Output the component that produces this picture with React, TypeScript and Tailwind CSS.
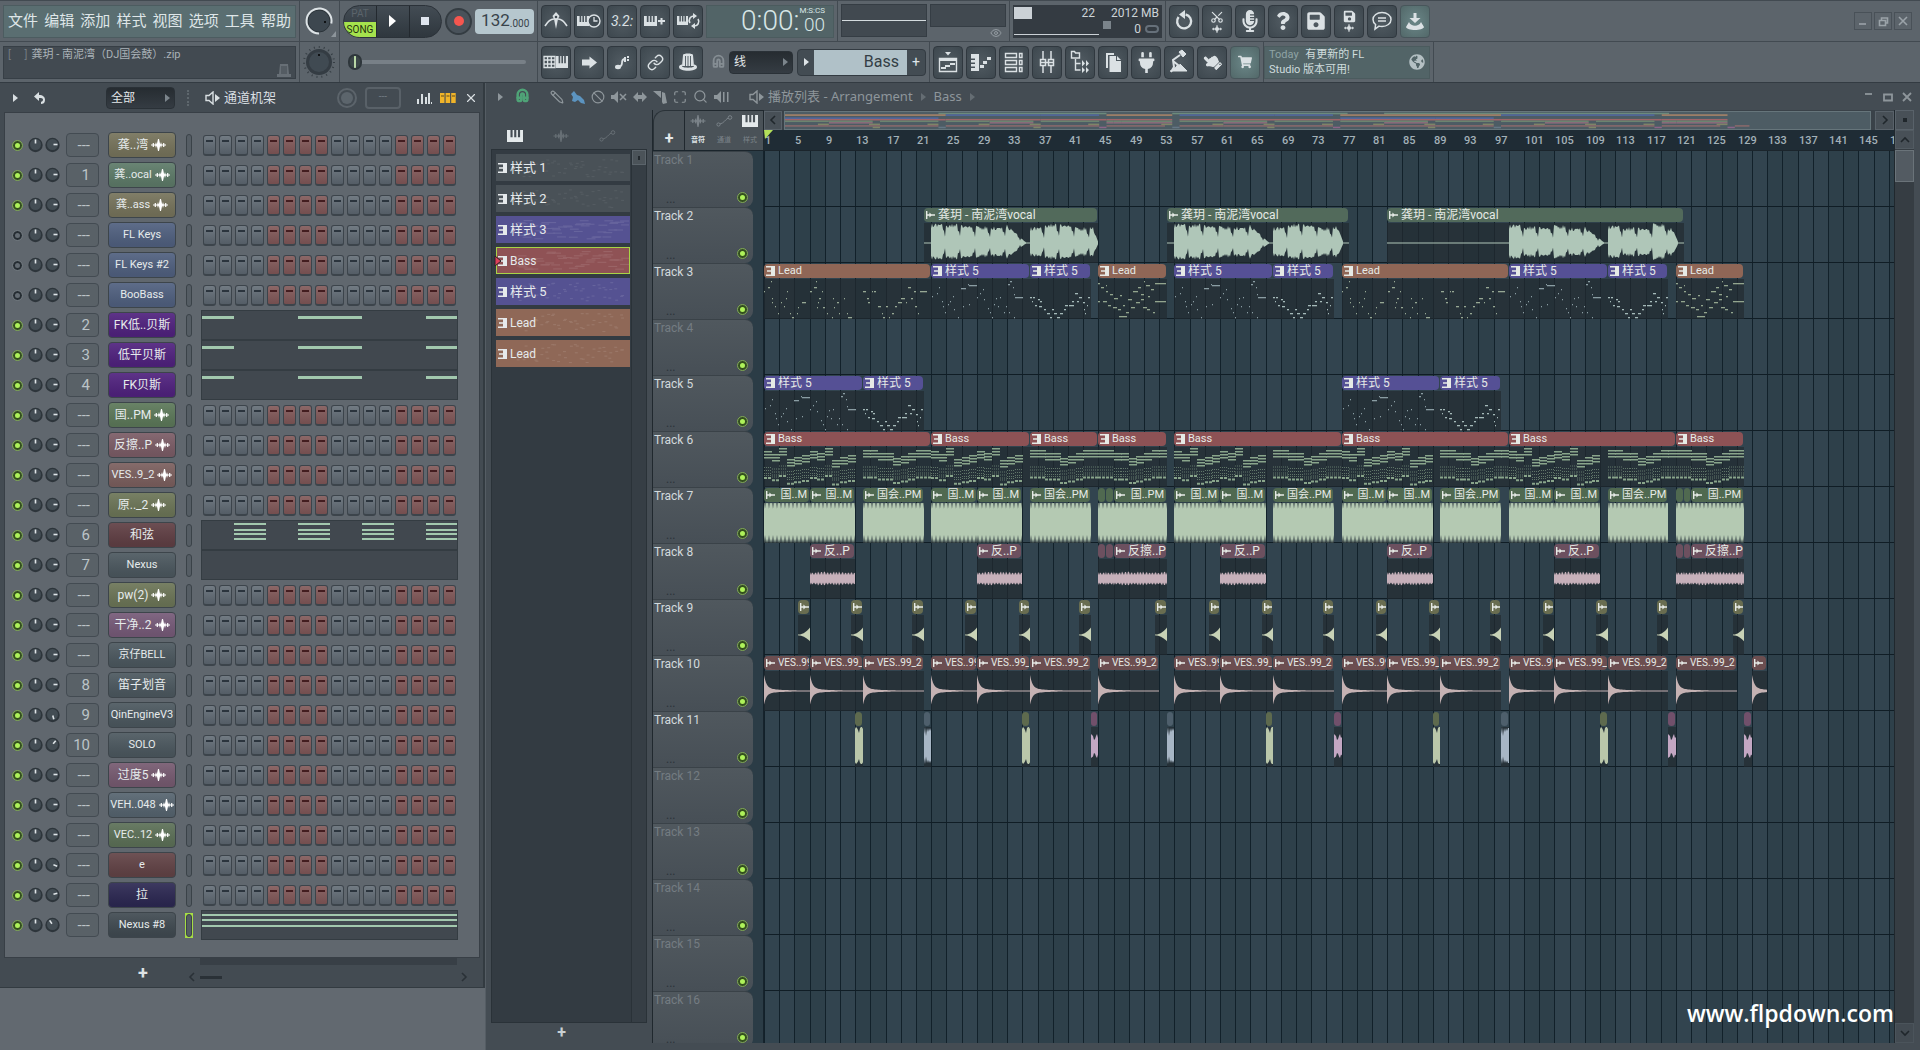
import { ReactNode } from 'react';
import clsx from 'clsx';
import { Link, Scissors, Eye, Magnet, X, Search, Ban, Maximize, Pencil } from 'lucide-react';
import { FaQuestion, FaMicrophoneAlt, FaSave, FaPlug, FaHandPointUp, FaShoppingCart, FaGlobeAmericas } from 'react-icons/fa';

const BAR = 7.6;
const TOTAL_BARS = 148.5;

const px = (bars: number) => Math.round(bars * BAR);

function noise(n: number) {
  const s = Math.sin(n * 127.1 + 11.7) * 43758.5453;
  return s - Math.floor(s);
}

/* ---------- drawings ---------- */

function Svg({ w = 24, h = 24, className, children }: { w?: number; h?: number; className?: string; children: ReactNode }) {
  return (
    <svg width={w} height={h} viewBox={`0 0 ${w} ${h}`} className={clsx('shrink-0', className)} fill="currentColor" aria-hidden="true">
      {children}
    </svg>
  );
}

function Keys({ x = 0, y = 0, w = 12, h = 10 }: { x?: number; y?: number; w?: number; h?: number }) {
  const u = w / 12;
  return (
    <path
      d={`M${x} ${y}h${2.6 * u}v${h * 0.6}h${1.6 * u}v${-h * 0.6}h${1.2 * u}v${h * 0.6}h${1.6 * u}v${-h * 0.6}h${1.2 * u}v${h * 0.6}h${1.6 * u}v${-h * 0.6}h${2.2 * u}v${h}h${-w}z`}
    />
  );
}

function KeysIcon({ w = 16, h = 12, className }: { w?: number; h?: number; className?: string }) {
  return (
    <Svg w={w} h={h} className={className}>
      <Keys w={w} h={h} />
    </Svg>
  );
}

function WaveIcon({ className, w = 15, h = 12 }: { className?: string; w?: number; h?: number }) {
  return (
    <svg width={w} height={h} viewBox="0 0 15 12" fill="currentColor" className={clsx('shrink-0', className)} aria-hidden="true">
      <path d="M0 5.400h1.700V4h1.200v1.400h1.300l.8-2.400.8 2.400L7 0h1l1.200 5.400.8-2.400.8 2.400h1.300V4h1.200v1.400H15v1.200h-1.700V8h-1.200V6.600h-1.300L10 9l-.8-2.400L8 12H7L5.800 6.600 5 9l-.8-2.400H2.900V8H1.700V6.600H0z" />
    </svg>
  );
}

function AutomationIcon({ className }: { className?: string }) {
  return (
    <Svg w={17} h={12} className={className}>
      <g fill="none" stroke="currentColor">
        <circle cx="2.5" cy="9.5" r="1.6" />
        <circle cx="14" cy="2.5" r="1.8" />
        <path d="M4 9c4-1 5-4 8-6" />
      </g>
    </Svg>
  );
}

function SpeakerArrow({ className }: { className?: string }) {
  return (
    <Svg w={15} h={14} className={className}>
      <path d="M8 1v12L4 9.5H1v-5h3z" fill="none" stroke="currentColor" strokeWidth="1.4" />
      <path d="M10 3l5 4-5 4z" />
    </Svg>
  );
}

function PatternGlyph() {
  return (
    <Svg w={9} h={10}>
      <path d="M0 0h9v10H0V8.400h5V5.800H1V4.200h4V1.600H0z" />
    </Svg>
  );
}

function SampleGlyph() {
  return (
    <Svg w={9} h={8}>
      <path d="M0 0h1.400v3.300h2V1.500L5.400 3.300H9v1.400H5.400L3.400 6.500V4.700h-2V8H0z" />
    </Svg>
  );
}

function Chevron({ className }: { className?: string }) {
  return (
    <Svg w={5} h={8} className={className}>
      <path d="M0 0l5 4-5 4z" />
    </Svg>
  );
}

function Angle({ className, d }: { className?: string; d: string }) {
  return (
    <Svg w={10} h={10} className={className}>
      <path d={d} fill="none" stroke="currentColor" strokeWidth="1.6" />
    </Svg>
  );
}

const toolIcons: Record<string, ReactNode> = {
  metronome: (
    <Svg w={28} h={30}>
      <path d="M3 20c3-5 6-7 9-7M25 20c-3-5-6-7-9-7" fill="none" stroke="currentColor" strokeWidth="1.6" />
      <path d="M14 6l3.500 4-1.500 3-2 10-2-10-1.500-3z" />
      <circle cx="14" cy="11" r="1.300" fill="#414b52" />
    </Svg>
  ),
  countdown: (
    <Svg w={28} h={30}>
      <Keys x={2} y={10} w={12} h={10} />
      <circle cx="19" cy="15" r="6" fill="#414b52" stroke="currentColor" strokeWidth="1.400" />
      <path d="M19 11v4h3.500" fill="none" stroke="currentColor" strokeWidth="1.300" />
    </Svg>
  ),
  blend: (
    <Svg w={28} h={30}>
      <Keys x={3} y={10} w={13} h={10} />
      <path d="M19.500 12h2v2h2.500v2h-2.500v2.500h-2V16H17v-2h2.500z" />
    </Svg>
  ),
  loop: (
    <Svg w={28} h={30}>
      <Keys x={3} y={10} w={11} h={9} />
      <path d="M16 17a4.500 4.500 0 0 1 4-7M24 13a4.500 4.500 0 0 1-4 7" fill="none" stroke="currentColor" strokeWidth="1.600" />
      <path d="M19 7l4 3-4 3zM21 17l-4 3 4 3z" />
    </Svg>
  ),
  typing: (
    <Svg w={28} h={30}>
      <path d="M2 9.500h11v11H2zM2 13h11M2 17h11M5.600 9.500v11M9.300 9.500v11" fill="none" stroke="currentColor" strokeWidth="1.300" />
      <Keys x={14} y={9} w={12} h={12} />
    </Svg>
  ),
  arrow: (
    <Svg w={28} h={30}>
      <path d="M7 12.500h7.500V9.500l7.500 6-7.500 6v-3H7z" />
    </Svg>
  ),
  slide: (
    <Svg w={28} h={30}>
      <path d="M9 20c3 0 5-1 5-4s1-4 3-4" fill="none" stroke="currentColor" strokeWidth="1.800" />
      <ellipse cx="10" cy="20" rx="3" ry="2.200" />
      <path d="M16 10h2v5h-2zM19 9h2v2h-2zM19 12h2v2h-2z" />
    </Svg>
  ),
  knob: (
    <Svg w={28} h={30}>
      <path d="M9 8c0-2 10-2 10 0l1 11H8z" />
      <path d="M11.500 9v10M14 9v10M16.500 9v10" stroke="#5a646b" />
      <path d="M5 20c0-2 3-2.500 3-2.500v2c2 1.600 10 1.600 12 0v-2s3 .500 3 2.500c0 5-18 5-18 0z" />
    </Svg>
  ),
  playlist: (
    <Svg w={28} h={30}>
      <path d="M11 5h6l-3 3.500z" />
      <path d="M5.500 11.500h17v13h-17z" fill="none" stroke="currentColor" strokeWidth="1.400" />
      <path d="M5 11h18v3H5zM7 20h5v2H7zM11 18h5v2h-5zM16 16h5v2h-5z" />
    </Svg>
  ),
  piano: (
    <Svg w={28} h={30}>
      <path d="M4 7h8v17H4v-3h4v-1.500H4V17h4v-1.500H4V13h4v-1.500H4z" />
      <path d="M13 18h4v3h-4zM16 14h4v3h-4zM20 10h4v3h-4z" />
    </Svg>
  ),
  rack: (
    <Svg w={28} h={30}>
      <path d="M5.500 6.500h11v4h-11zM5.500 13.500h11v4h-11zM5.500 20.500h11v4h-11zM19.500 6.500h2.500v4h-2.500zM19.500 13.500h2.500v4h-2.500zM19.500 20.500h2.500v4h-2.500z" fill="none" stroke="currentColor" strokeWidth="1.400" />
    </Svg>
  ),
  mixer: (
    <Svg w={28} h={30}>
      <path d="M10 4v8M10 19v7M18 4v8M18 19v7M7.500 12.500h5v6h-5zM15.500 12.500h5v6h-5zM8 15.500h12" fill="none" stroke="currentColor" strokeWidth="1.500" />
    </Svg>
  ),
  browser: (
    <Svg w={28} h={30}>
      <path d="M5.500 4.500h3l1 1.500h4v5h-8zM9.500 12v11h5M9.500 16.500h5" fill="none" stroke="currentColor" strokeWidth="1.400" />
      <path d="M16 13l3 3.500-3 3zM20 13l3 3.500-3 3zM16 20l3 3-3 3zM20 20l3 3-3 3z" />
    </Svg>
  ),
  copy: (
    <Svg w={28} h={30}>
      <path d="M7 6h8v2H9v13H7z" />
      <path d="M10.500 9H17v5h5v11H10.500zM18 9l4 4h-4z" />
    </Svg>
  ),
  crane: (
    <Svg w={28} h={30}>
      <path d="M14 5l3-2 4 4-3 3zM5 24h17l-7-7" stroke="currentColor" strokeWidth="1" />
      <path d="M15 8l-7 5 1 7-3 5M8 14l5 4-3 5" fill="none" stroke="currentColor" strokeWidth="2" />
    </Svg>
  ),
  undo: (
    <Svg w={28} h={30}>
      <path d="M8.600 11a7 7 0 1 0 7-2.500" fill="none" stroke="currentColor" strokeWidth="2.400" />
      <path d="M15 4v9l-6-4.500z" />
    </Svg>
  ),
  chat: (
    <Svg w={28} h={30}>
      <path d="M14 6.500c5 0 9 3 9 7s-4 7-9 7c-1 0-2 0-3-.400L7 23l.600-4.500C6 17.300 5 15.500 5 13.500c0-4 4-7 9-7zM10 12h8M10 15h8" fill="none" stroke="currentColor" strokeWidth="1.500" />
    </Svg>
  ),
  cut: (
    <div className="flex flex-col items-center gap-px">
      <Scissors size={14} className="-rotate-90" />
      <WaveIcon w={12} h={8} />
    </div>
  ),
  saveWave: (
    <div className="flex flex-col items-center gap-px">
      <FaSave size={13} />
      <WaveIcon w={12} h={8} />
    </div>
  ),
  download: (
    <Svg w={28} h={30}>
      <path d="M12.500 7h3v5h4L14 17l-5.500-5h4z" />
      <path d="M8 16c2 5 10 5 12 0l3 5c-1 4-17 4-18 0z" />
    </Svg>
  ),
  count: <span className="text-sm leading-4 italic">3.2:</span>,
  mic: <FaMicrophoneAlt size={22} />,
  help: <FaQuestion size={18} />,
  save: <FaSave size={20} />,
  link: <Link size={17} />,
  plug: <FaPlug size={21} />,
  hand: <FaHandPointUp size={18} className="-rotate-45" />,
  cart: <FaShoppingCart size={14} />,
};

/* ---------- toolbar ---------- */

function ToolButton({ icon, label, lit }: { icon: string; label: string; lit?: boolean }) {
  return (
    <button
      type="button"
      aria-label={label}
      className={clsx(
        'flex h-[33px] w-[30px] shrink-0 items-center justify-center overflow-hidden rounded border text-[#dbe1e4]',
        lit
          ? 'border-[#48565b] bg-radial from-[#6b8788] to-[#526869]'
          : 'border-[#30383f] bg-radial from-[#515b62] to-[#3d474e]',
      )}
    >
      {toolIcons[icon]}
    </button>
  );
}

function Section({ children, className }: { children?: ReactNode; className?: string }) {
  return <div className={clsx('flex h-full shrink-0 items-center gap-[3px] border-r border-[#424a51] px-[3px]', className)}>{children}</div>;
}

const tools = (list: [string, string][]) => list.map(([icon, label]) => <ToolButton key={icon} icon={icon} label={label} />);

function Picker({ label, value, className }: { label: string; value: string; className?: string }) {
  return (
    <div className={clsx('relative flex rounded-sm border border-[#2a3137] bg-linear-to-b from-[#262c31] to-[#353c43]', className)}>
      <select aria-label={label} className="h-full w-full appearance-none px-1 text-[12px] leading-4 text-[#e3e8ea] outline-none">
        <option>{value}</option>
      </select>
      <Chevron className="pointer-events-none absolute top-1/2 right-1 -translate-y-1/2 text-[#7c858c]" />
    </div>
  );
}

function Toolbar() {
  return (
    <header className="shrink-0 border-b border-[#333b42] bg-[#5c646b]">
      <div className="flex h-[42px] items-center border-t border-b border-[#424a51]">
        <Section className="w-[300px]">
          <nav className="flex h-[33px] flex-1 items-center justify-between border border-[#4c5c60] bg-[#5a6e71] px-1 text-[15px] text-[#dfe6e8]">
            {['文件', '编辑', '添加', '样式', '视图', '选项', '工具', '帮助'].map((m) => (
              <button key={m} type="button">{m}</button>
            ))}
          </nav>
        </Section>
        <Section className="w-10 justify-center">
          <button type="button" aria-label="主音量">
            <Svg w={32} h={32}>
              <circle cx="15" cy="16" r="11" fill="#3d474f" stroke="#2b3339" />
              <path d="M15 28.500a12.500 12.500 0 1 1 12.300-10" fill="none" stroke="#dde3e6" strokeWidth="2" />
              <circle cx="21" cy="17" r="1" />
              <path d="M32 26v6h-5z" fill="#8d959b" />
            </Svg>
          </button>
        </Section>
        <Section className="w-[198px]">
          <div className="flex h-[33px] w-[99px] overflow-hidden rounded-[17px] border border-[#2b3239] bg-linear-to-b from-[#434c54] to-[#2f373e]">
            <button type="button" className="flex w-[33px] flex-col border-r border-[#23292f] text-center text-[10px]">
              <span className="h-4 leading-4 text-[#5b646b]">PAT</span>
              <span className="h-4 bg-[#a5e34d] leading-4 text-[#24300f]">SONG</span>
            </button>
            <button type="button" aria-label="播放" className="flex flex-1 items-center justify-center border-r border-[#23292f] text-white">
              <Svg w={7} h={12}><path d="M0 0l7 6-7 6z" /></Svg>
            </button>
            <button type="button" aria-label="停止" className="flex flex-1 items-center justify-center">
              <span className="size-2 bg-[#dfe5ee]" />
            </button>
          </div>
          <button type="button" aria-label="录音" className="flex size-[27px] items-center justify-center rounded-full border-2 border-[#343c42] bg-[#49525a]">
            <span className="size-[10px] rounded-full bg-[#f5564f]" />
          </button>
          <div className="flex h-[25px] flex-1 items-center justify-center rounded bg-[#b6c7ce] text-[#38434a]">
            <input aria-label="速度" defaultValue="132" className="w-[30px] text-right text-[17px] outline-none" />
            <span className="pt-1 text-[10px]">.000</span>
          </div>
        </Section>
        <Section className="w-[300px]">
          {tools([['metronome', '节拍器'], ['countdown', '等待输入'], ['count', '倒数'], ['blend', '叠加录音'], ['loop', '循环录音']])}
          <div className="flex h-[33px] flex-1 items-center justify-end border border-[#4b5b5e] bg-[#526467] pr-2 text-[#d7e6e6]">
            <span className="text-[28px] leading-8 font-light">0:00:</span>
            <span className="flex flex-col items-end">
              <span className="text-[8px] leading-2">M:S:CS</span>
              <span className="text-[19px] leading-5 font-light">00</span>
            </span>
          </div>
        </Section>
        <Section className="w-[172px] items-start pt-[3px]">
          <div className="flex h-[33px] w-[86px] items-center border border-[#353d44] bg-[#414950]">
            <span className="h-px w-full bg-[#d5dcdf]" />
          </div>
          <div className="flex flex-1 flex-col items-end">
            <div className="h-[23px] w-full border border-[#353d44] bg-[#414950]" />
            <Eye size={12} className="mr-1 text-[#939ba1]" />
          </div>
        </Section>
        <Section className="w-[156px]">
          <div className="flex h-[33px] flex-1 flex-col bg-[#343b42] text-xs text-[#cdd4d8]">
            <div className="flex h-4 items-center gap-2 pr-[3px]">
              <span className="ml-px h-3 w-[18px] bg-[#cbd1d6]" />
              <span className="flex-1 text-right">22</span>
              <span className="w-[56px] text-right">2012 MB</span>
            </div>
            <div className="flex h-4 items-center justify-end gap-1 pr-[3px]">
              <span className="mt-3 ml-px h-px flex-1 bg-[#cbd1d6]" />
              <span className="mb-2 h-2 w-2 bg-[#7b848b]" />
              <span className="w-[26px] text-right">0</span>
              <span className="h-2 w-[14px] rounded-full border-2 border-[#66707a]" />
            </div>
          </div>
        </Section>
        <div className="flex gap-[3px] pl-[3px]">
          {tools([['undo', '撤销'], ['cut', '剪切'], ['mic', '录音设置'], ['help', '帮助'], ['save', '保存'], ['saveWave', '导出'], ['chat', '聊天']])}
          <ToolButton icon="download" label="更新" lit />
        </div>
        <div className="ml-auto flex gap-[2px] pr-2">
          {['M4 11h7', 'M4.500 7.500h6v5h-6zM6.500 7.500v-2.500h6v5h-2', 'M4 4l8 8M12 4l-8 8'].map((d, i) => (
            <button key={d} type="button" aria-label={['最小化', '还原', '关闭'][i]} className="flex size-[18px] items-center justify-center border border-[#495158] text-[#9ba3a9]">
              <Svg w={16} h={16}><path d={d} fill="none" stroke="currentColor" strokeWidth="1.600" /></Svg>
            </button>
          ))}
        </div>
      </div>
      <div className="flex h-10 items-center">
        <Section className="w-[300px]">
          <div className="flex h-[33px] flex-1 justify-between border border-[#373f46] bg-[#424a51] px-1 text-[11px] leading-4 text-[#aab2b7]">
            <p className="whitespace-nowrap"><span className="mr-1 text-[#727b82]">[&nbsp;&nbsp;&nbsp;&nbsp;&nbsp;]</span>龚玥 - 南泥湾（DJ国会鼓）.zip</p>
            <Svg w={14} h={16} className="self-end text-[#676f76]">
              <path d="M3 2h8l1 10h2v3H0v-3h2z" />
              <path d="M5 4v8M7 4v8M9 4v8" stroke="#424a51" />
            </Svg>
          </div>
        </Section>
        <Section className="w-10 justify-center">
          <button type="button" aria-label="主音高">
            <Svg w={34} h={34}>
              <circle cx="16" cy="17" r="15" fill="none" stroke="#363e44" strokeWidth="2" strokeDasharray="1 4" />
              <circle cx="16" cy="17" r="13" fill="#343c43" />
              <circle cx="16" cy="17" r="10" fill="#404a52" />
              <circle cx="16" cy="10" r="1" />
            </Svg>
          </button>
        </Section>
        <Section className="w-[198px]">
          <input
            type="range"
            aria-label="音高"
            defaultValue={0}
            className="mr-2 ml-[5px] h-1 w-full appearance-none rounded bg-[#788087] [&::-webkit-slider-thumb]:h-4 [&::-webkit-slider-thumb]:w-[14px] [&::-webkit-slider-thumb]:appearance-none [&::-webkit-slider-thumb]:rounded-full [&::-webkit-slider-thumb]:border-2 [&::-webkit-slider-thumb]:border-[#2e363b] [&::-webkit-slider-thumb]:bg-[linear-gradient(90deg,#3b4647_4px,#b9d7a6_4px,#b9d7a6_6px,#3b4647_6px)]"
          />
        </Section>
        <Section className="w-[392px]">
          {tools([['typing', '键盘'], ['arrow', '步进'], ['slide', '滑音'], ['link', '链接'], ['knob', '控制器']])}
          <Magnet size={15} strokeWidth={3} className="mr-0 ml-[5px] -rotate-45 text-[#858d93]" />
          <Picker label="吸附" value="线" className="h-[23px] w-[64px]" />
          <div className="ml-auto flex h-[27px] w-[129px] overflow-hidden rounded border border-[#333b42] bg-[#434c53]">
            <button type="button" aria-label="上一样式" className="flex w-4 items-center justify-center text-[#dfe5e8]"><Chevron /></button>
            <select aria-label="当前样式" className="flex-1 appearance-none bg-[#b0c1c8] pr-2 text-right text-[16px] leading-6 text-[#333e45] outline-none [text-align-last:right]">
              <option>Bass</option>
            </select>
            <button type="button" aria-label="新样式" className="w-[18px] text-center text-sm text-[#dfe5e8]">+</button>
          </div>
        </Section>
        <Section>
          {tools([['playlist', '播放列表'], ['piano', '钢琴卷帘'], ['rack', '通道机架'], ['mixer', '混音台'], ['browser', '浏览器'], ['copy', '复制'], ['plug', '插件'], ['crane', '工具'], ['hand', '触控']])}
          <ToolButton icon="cart" label="商店" lit />
        </Section>
        <Section className="w-[170px] pl-0">
          <div className="flex h-[33px] flex-1 items-center justify-between border border-[#4b5b5e] bg-[#526467] px-1 text-[11px] leading-[15px] text-[#cfdcdd]">
            <p><span className="mr-1 text-[#8fa3a5]">Today</span> 有更新的 FL<br />Studio 版本可用!</p>
            <FaGlobeAmericas size={16} className="text-[#b4c0c3]" />
          </div>
        </Section>
      </div>
    </header>
  );
}

/* ---------- channel rack ---------- */

interface Channel {
  name: string;
  color: string;
  no?: string;
  wave?: boolean;
  off?: boolean;
  roll?: [number, number, number][];
  selected?: boolean;
  angle?: number;
}

const bassRoll: [number, number, number][] = [[0, 6, 32], [96, 6, 64], [224, 6, 33]];
const chordRoll: [number, number, number][] = [32, 96, 160, 224].flatMap((x) => [3, 9, 13, 18].map((y) => [x, y, 32] as [number, number, number]));
const padRoll: [number, number, number][] = [[0, 4, 256], [0, 9, 256], [0, 15, 256]];

const channels: Channel[] = [
  { name: '龚..湾', color: 'bg-[#76735b]', wave: true },
  { name: '龚..ocal', color: 'bg-[#5d7a68]', wave: true, no: '1' },
  { name: '龚..ass', color: 'bg-[#76735b]', wave: true },
  { name: 'FL Keys', color: 'bg-[#50607f]', off: true },
  { name: 'FL Keys #2', color: 'bg-[#50607f]', off: true },
  { name: 'BooBass', color: 'bg-[#50607f]', off: true },
  { name: 'FK低..贝斯', color: 'bg-[#50227e]', no: '2', roll: bassRoll },
  { name: '低平贝斯', color: 'bg-[#50227e]', no: '3', roll: bassRoll },
  { name: 'FK贝斯', color: 'bg-[#50227e]', no: '4', roll: bassRoll },
  { name: '国..PM', color: 'bg-[#5c7859]', wave: true },
  { name: '反擦..P', color: 'bg-[#7b5c66]', wave: true },
  { name: 'VES..9_2', color: 'bg-[#7b5f5e]', wave: true },
  { name: '原.._2', color: 'bg-[#6c7557]', wave: true },
  { name: '和弦', color: 'bg-[#603f44]', no: '6', roll: chordRoll },
  { name: 'Nexus', color: 'bg-[#4c585f]', no: '7', roll: [] },
  { name: 'pw(2)', color: 'bg-[#6c7557]', wave: true },
  { name: '干净..2', color: 'bg-[#765a78]', wave: true },
  { name: '京仔BELL', color: 'bg-[#4c585f]' },
  { name: '笛子划音', color: 'bg-[#4c585f]', no: '8' },
  { name: 'QinEngineV3', color: 'bg-[#4c585f]', no: '9', angle: 165 },
  { name: 'SOLO', color: 'bg-[#4c585f]', no: '10', angle: 40 },
  { name: '过度5', color: 'bg-[#765a70]', wave: true },
  { name: 'VEH..048', color: 'bg-[#56646f]', wave: true },
  { name: 'VEC..12', color: 'bg-[#5c7057]', wave: true },
  { name: 'e', color: 'bg-[#624346]', angle: 110 },
  { name: '拉', color: 'bg-[#2c2852]', angle: 75 },
  { name: 'Nexus #8', color: 'bg-[#404a51]', roll: padRoll, selected: true, angle: -35 },
];

function Led({ off, label }: { off?: boolean; label: string }) {
  return (
    <button
      type="button"
      aria-label={label}
      aria-pressed={!off}
      className={clsx('size-[9px] rounded-full border-2', off ? 'border-[#262d33] bg-[#646c73] outline outline-[#6e767c]' : 'border-[#33501d] bg-[#aef25a] outline outline-[#7fa852]')}
    />
  );
}

function Knob({ label, angle }: { label: string; angle: number }) {
  return (
    <button type="button" aria-label={label}>
      <Svg w={15} h={16}>
        <circle cx="7.5" cy="8" r="7.2" fill="#2d353b" />
        <circle cx="7.5" cy="7.5" r="5.5" fill="#434d54" />
        <path d="M7.5 2.500v4" stroke="#dfe5e8" strokeWidth="1.600" transform={`rotate(${angle} 7.5 7.5)`} />
      </Svg>
    </button>
  );
}

function ChannelRow({ channel }: { channel: Channel }) {
  const { name, color, no, wave, off, roll, selected, angle = 90 } = channel;
  return (
    <li className="flex h-[30px] items-center">
      <div className="flex w-[61px] items-center gap-[2px] pl-2">
        <span className="mr-1 flex"><Led off={off} label={`${name} 开关`} /></span>
        <Knob label="声相" angle={0} />
        <Knob label="音量" angle={angle} />
      </div>
      <input
        aria-label={`${name} 混音轨道`}
        defaultValue={no ?? '---'}
        className="h-6 w-[33px] rounded border border-[#434b52] bg-[#596167] pr-2 text-right text-[15px] text-[#bcc4c8] outline-none"
      />
      <button
        type="button"
        className={clsx('ml-[9px] flex h-[26px] w-[68px] items-center justify-center gap-[3px] rounded-sm border border-[#3d454b] bg-linear-to-b from-white/8 to-black/8 text-[#e6ebec]', color, /[A-Za-z]{3}|^e/.test(name) ? 'text-[11px]' : 'text-[12px]')}
      >
        <span className="whitespace-nowrap">{name}</span>
        {wave && <WaveIcon className="text-white" />}
      </button>
      <span className={clsx('ml-[9px] flex h-[25px] w-2 justify-center', selected && 'bg-[#a6dd45]')}>
        <span className="my-px h-[23px] w-[6px] rounded-sm border border-[#3a4248] bg-[#555d64]" />
      </span>
      {roll ? (
        <div className="ml-2 h-[30px] w-[257px] border border-[#343c42] bg-[#41484f]">
          <Svg w={255} h={28} className="text-[#a2c8ae]">
            {roll.map(([x, y, w], i) => (
              <rect key={i} x={x} y={y - 1} width={w} height={roll.length === 3 && !selected ? 3 : 2} />
            ))}
          </Svg>
        </div>
      ) : (
        <div className="ml-[10px] flex gap-[3px]">
          {Array.from({ length: 16 }, (_, i) => (
            <button
              key={i}
              type="button"
              aria-label={`${name} 第 ${i + 1} 步`}
              className={clsx('flex h-[21px] w-[13px] justify-center rounded-[3px] border border-b-2 border-[#3c444b] pt-1', i % 8 < 4 ? 'bg-linear-to-b from-[#727b83] to-[#545d66]' : 'bg-linear-to-b from-[#8c6767] to-[#744e4f]')}
            >
              <span className={clsx('h-[2px] w-[7px]', i % 8 < 4 ? 'bg-[#2b343d]' : 'bg-[#431d20]')} />
            </button>
          ))}
        </div>
      )}
    </li>
  );
}

function ChannelRack() {
  return (
    <section className="flex w-[485px] shrink-0 flex-col border-r-2 border-b border-[#333b41] bg-[#434b52] pr-[3px] pl-1">
      <div className="flex h-[29px] items-center text-[#d9dfe2]">
        <Chevron className="ml-[9px]" />
        <Svg w={12} h={12} className="ml-4">
          <path d="M0 4.500L5 0v3c4 0 6 2 6 5s-2 4-4 4v-2c1-.500 2-1 2-2.500S7.500 6 5 6v3z" />
        </Svg>
        <Picker label="筛选" value="全部" className="ml-[60px] h-[22px] w-[69px]" />
        <span className="ml-3 h-4 w-[2px] border-l-2 border-dotted border-[#5e676d]" />
        <SpeakerArrow className="ml-4" />
        <h2 className="ml-1 text-[13px]">通道机架</h2>
        <span className="ml-auto flex size-5 items-center justify-center rounded-full border-2 border-[#5c646b]">
          <span className="size-3 rounded-full bg-[#5c656c]" />
        </span>
        <span className="ml-2 h-[22px] w-9 rounded border-2 border-[#596168] text-center text-[10px] leading-4 text-[#727b82]">---</span>
        <Svg w={15} h={12} className="ml-4">
          <path d="M0 7h2v5H0zM4 2h2v10H4zM8 5h2v7H8zM11 1h2v11h-2zM14 10h1v2h-1z" />
        </Svg>
        <Svg w={16} h={12} className="ml-2 text-[#f0b429]">
          <path d="M0 1h4.500v10H0zM5.600 1h4.500v10H5.600zM11.200 1h4.500v10h-4.500z" />
          <path d="M1 4h3M6.500 4h3M12 4h3" stroke="#5c4a1c" />
        </Svg>
        <button type="button" aria-label="关闭" className="mr-[2px] ml-2"><X size={14} /></button>
      </div>
      <ul className="border border-[#383f46] bg-[#60676e] py-[17px]">
        {channels.map((c, i) => (
          <ChannelRow key={i} channel={c} />
        ))}
      </ul>
      <div className="flex h-[29px] items-center text-[#dde2e4]">
        <button type="button" aria-label="添加通道" className="ml-[129px] w-5 text-lg leading-4 font-bold">+</button>
        <div className="ml-[34px] flex h-full flex-1 flex-col gap-[7px]">
          <span className="mr-[23px] ml-[13px] h-[7px] bg-[#383f46]" />
          <div className="flex items-center text-[#2a3137]">
            <Angle d="M7 1L3 5l4 4" />
            <span className="ml-[3px] h-[3px] w-[22px] bg-[#2a3137]" />
            <Angle d="M3 1l4 4-4 4" className="mr-[11px] ml-auto" />
          </div>
        </div>
      </div>
    </section>
  );
}

/* ---------- playlist data ---------- */

type Kind = 'lead' | 'lead2' | 'styleA' | 'styleB' | 'bass' | 'vocal' | 'kick' | 'scratch' | 'rise' | 'hit' | 'fxY' | 'fxB' | 'fxP';
type Clip = [start: number, end: number, kind: Kind, label?: string];

const headColor: Record<Kind, string> = {
  lead: 'bg-[#8f6656]', lead2: 'bg-[#8f6656]', styleA: 'bg-[#555095]', styleB: 'bg-[#555095]', bass: 'bg-[#8d5255]',
  vocal: 'bg-[#526a5b]', kick: 'bg-[#506950]', scratch: 'bg-[#6c505f]', rise: 'bg-[#696d50]', hit: 'bg-[#6c4e50]',
  fxY: 'bg-[#5e6a4e]', fxB: 'bg-[#4e5f6c]', fxP: 'bg-[#71506b]',
};
const bodyColor: Record<Kind, string> = {
  lead: 'text-[#97a894]', lead2: 'text-[#93a58e]', styleA: 'text-[#8a9da3]', styleB: 'text-[#a5bab9]', bass: 'text-[#89a58b]',
  vocal: 'text-[#afc6b8]', kick: 'text-[#b4c9b2]', scratch: 'text-[#c6b0ba]', rise: 'text-[#c8d2b6]', hit: 'text-[#c5b2b3]',
  fxY: 'text-[#bac7aa]', fxB: 'text-[#a7b6c5]', fxP: 'text-[#c3a7c3]',
};
const miniColor: Record<Kind, string> = {
  lead: '#a98468', lead2: '#a98468', styleA: '#5268a0', styleB: '#5268a0', bass: '#a06468', vocal: '#6c8a7b', kick: '#6c8470',
  scratch: '#8c6c7c', rise: '#7e8468', hit: '#8a6a6c', fxY: '#7e8468', fxB: '#647684', fxP: '#8c6488',
};

const style = (s: number): Clip[] => [[s, s + 13, 'styleA', '样式 5'], [s + 13, s + 21, 'styleB', '样式 5']];
const starts = [0, 22, 54, 76, 98];

const kicks: Clip[] = starts.flatMap((s): Clip[] => [[s, s + 6, 'kick', '国..M'], [s + 6, s + 12, 'kick', '国..M'], [s + 13, s + 21, 'kick', '国会..PM']]);
const kickEnds: Clip[] = [44, 120].flatMap((s): Clip[] => [[s, s + 1, 'kick'], [s + 1, s + 2, 'kick'], [s + 2, s + 9, 'kick', '国..PM']]);
const scratchEnds: Clip[] = [44, 120].flatMap((s): Clip[] => [[s, s + 1, 'scratch'], [s + 1, s + 2, 'scratch'], [s + 2, s + 9, 'scratch', '反擦..P']]);

const trackClips: Record<number, Clip[]> = {
  2: [[21, 44, 'vocal', '龚玥 - 南泥湾vocal'], [53, 77, 'vocal', '龚玥 - 南泥湾vocal'], [82, 121, 'vocal', '龚玥 - 南泥湾vocal']],
  3: [[0, 22, 'lead', 'Lead'], ...style(22), [44, 53, 'lead2', 'Lead'], ...style(54), [76, 98, 'lead', 'Lead'], ...style(98), [120, 129, 'lead2', 'Lead']],
  5: [...style(0), ...style(76)],
  6: [[0, 22], [22, 35], [35, 44], [44, 53], [54, 76], [76, 98], [98, 120], [120, 129]].map(([a, b]): Clip => [a, b, 'bass', 'Bass']),
  7: [...kicks, ...kickEnds],
  8: [...[6, 28, 60, 82, 104].map((s): Clip => [s, s + 6, 'scratch', '反..P']), ...scratchEnds],
  9: [6, 13, 21, 28, 35, 43, 53, 60, 67, 75, 82, 89, 97, 104, 111, 129].map((e): Clip => [e - 1.5, e, 'rise', '']).concat([[117.5, 119, 'rise', '']]),
  10: [
    ...starts.flatMap((s): Clip[] => [[s, s + 6, 'hit', 'VES..99_2'], [s + 6, s + 13, 'hit', 'VES..99_2'], [s + 13, s + 21, 'hit', 'VES..99_2']]),
    [44, 52, 'hit', 'VES..99_2'], [120, 128, 'hit', 'VES..99_2'], [130, 132, 'hit', ''],
  ],
  11: [
    ...[12, 34, 66, 88, 110].map((s): Clip => [s, s + 1, 'fxY']),
    ...[21, 53, 97].map((s): Clip => [s, s + 1, 'fxB']),
    ...[43, 75, 119, 129].map((s): Clip => [s, s + 1, 'fxP']),
  ],
};

// note positions inside a clip: x, y, width
const notes: Record<string, number[][]> = {
  styleA: [[1, 17, 1], [6, 14, 1], [8, 8, 1], [11, 22, 1], [12, 27, 1], [14, 33, 1], [17, 25, 1], [19, 22, 1], [22, 17, 1], [23, 30, 1], [27, 38, 1], [30, 9, 5], [37, 5, 1], [38, 6, 8], [32, 27, 1], [38, 25, 1], [46, 18, 1], [49, 14, 1], [52, 10, 1], [53, 20, 1], [57, 29, 1], [59, 33, 1], [61, 38, 1], [63, 25, 1], [65, 19, 1], [67, 27, 1], [69, 18, 1], [73, 33, 1], [77, 5, 2], [79, 2, 2], [82, 8, 1], [83, 15, 1], [84, 18, 8], [75, 27, 1], [78, 33, 1], [83, 38, 1]],
  styleB: [[0, 18, 2], [3, 18, 2], [2, 22, 1], [5, 26, 2], [8, 20, 2], [10, 22, 2], [9, 27, 3], [14, 30, 2], [17, 34, 3], [20, 38, 2], [22, 30, 2], [24, 34, 3], [27, 38, 3], [30, 34, 3], [34, 30, 2], [35, 26, 3], [39, 26, 5], [42, 22, 2], [45, 14, 3], [47, 22, 2], [49, 18, 3], [53, 23, 2], [58, 18, 2], [54, 30, 1], [55, 34, 1], [57, 26, 1]],
  lead: [[0, 12, 1], [4, 8, 2], [7, 2, 1], [8, 19, 1], [8, 23, 1], [11, 27, 1], [14, 34, 1], [17, 23, 1], [20, 27, 1], [22, 19, 1], [23, 12, 1], [26, 34, 1], [28, 38, 2], [33, 34, 1], [34, 28, 1], [38, 23, 4], [46, 12, 2], [50, 8, 3], [52, 2, 1], [55, 19, 2], [53, 28, 1], [54, 23, 1], [58, 12, 1], [59, 28, 2], [63, 34, 1], [68, 38, 1], [69, 19, 1], [70, 28, 1], [73, 23, 2], [75, 34, 1], [80, 19, 1], [83, 34, 1], [84, 38, 4], [99, 12, 3], [103, 19, 2], [104, 23, 2], [108, 12, 1], [110, 12, 2], [114, 27, 3], [118, 34, 1], [119, 38, 2], [122, 27, 2], [125, 38, 1], [128, 34, 2], [131, 27, 2], [134, 23, 4], [137, 19, 4], [142, 23, 1], [144, 8, 3], [147, 19, 2], [150, 12, 2], [151, 27, 2], [154, 34, 1], [156, 12, 7]],
  lead2: [[0, 4, 2], [3, 8, 3], [8, 12, 2], [12, 15, 3], [16, 19, 4], [5, 22, 4], [0, 22, 2], [10, 26, 3], [15, 28, 4], [20, 30, 3], [21, 37, 8], [28, 33, 3], [33, 28, 4], [38, 23, 4], [43, 20, 3], [35, 12, 5], [40, 8, 3], [46, 2, 1], [48, 6, 4], [53, 10, 3], [57, 4, 11], [57, 22, 11], [45, 28, 4], [49, 30, 3], [55, 33, 2], [25, 26, 2], [30, 20, 4], [22, 16, 2], [8, 6, 1], [43, 15, 3], [50, 17, 2]],
};

// bass chords, one entry per bar: vertical offset of the stack
const bassA = [3, 6, 0, 11, 9, 7, 3, 5, 0, 12, 9, 7];
const bassB = [2, 2, 5, 5, 10, 8, 5, 2, 2];
const bassStarts = [98, 76, 54, 22, 0];

function bassAt(bar: number) {
  if (bar >= 120) return bassB[bar - 120];
  if (bar >= 44 && bar < 53) return bassB[bar - 44];
  const p = bar - (bassStarts.find((s) => bar >= s) ?? 0);
  if (p < 12) return bassA[p];
  return p === 12 ? -1 : bassB[p - 13] ?? -1;
}

/* ---------- clip bodies ---------- */

function mirrored(from: number, to: number, mid: number, amp: (x: number) => number) {
  const top: string[] = [];
  const bottom: string[] = [];
  for (let x = from; x <= to; x++) {
    const a = amp(x);
    top.push(`${x} ${(mid - a).toFixed(1)}`);
    bottom.unshift(`${x} ${(mid + a * 0.85).toFixed(1)}`);
  }
  return `M${top.concat(bottom).join('L')}z`;
}

const phrase = (from: number, to: number, tail: boolean) =>
  mirrored(from, to, 20, (x) => {
    const p = x - from;
    const left = to - x;
    const syllable = Math.floor(p / 15);
    const q = p % 15;
    const shape = q === 14 ? 0.4 : q > 11 ? 0.75 : 1;
    const end = tail ? Math.min(1, left / 20 + 0.05) : Math.min(1, left / 6 + 0.1);
    return (11 + 4 * noise(syllable * 3 + from) + 5 * noise(p + 3)) * shape * end;
  });

function ClipBody({ kind, start, end }: { kind: Kind; start: number; end: number }) {
  const w = px(end) - px(start);
  if (kind === 'vocal') {
    const voice = start === 21 ? 22 : start === 53 ? 54 : 98;
    const a = px(voice) - px(start);
    const b = px(voice + 13) - px(start);
    return (
      <>
        <path d={`M0 19.5h${w}v1H0z`} />
        <path d={phrase(a, b - 4, true)} />
        <path d={phrase(b, start === 21 ? w : w - 6, false)} />
      </>
    );
  }
  if (kind === 'bass') {
    return (
      <>
        {Array.from({ length: end - start }, (_, i) => {
          const y = bassAt(start + i);
          if (y < 0) return null;
          const x = px(start + i) - px(start);
          return (
            <g key={i}>
              <path d={`M${x} ${y + 1}h8v1.500h-8zM${x} ${y + 4}h8v1.500h-8zM${x} ${y + 7}h8v1.500h-8z`} />
              <path d={`M${x} ${y / 2 + 19}h8M${x} ${y / 2 + 22}h8M${x} ${y / 2 + 25}h8M${x} ${y / 2 + 27}h8`} stroke="currentColor" strokeDasharray="1 1" opacity="0.600" />
              <path d={`M${x} ${y * 0.7 + 29}h8`} stroke="currentColor" strokeWidth="2" strokeDasharray="3 1" />
            </g>
          );
        })}
      </>
    );
  }
  if (kind === 'kick') return <path d={mirrored(0, w, 20, (x) => (x % 4 === 1 ? 14 : x % 4 === 3 ? 19 : 24))} />;
  if (kind === 'scratch') return <path d={mirrored(0, w, 20, (x) => (x % 3 === 1 ? 4 : 5.5 + 2 * noise(x)))} />;
  if (kind === 'rise') return <path d={mirrored(0, w, 20, (x) => 0.4 + 7 * (x / w) ** 2)} />;
  if (kind === 'hit') return <path d={mirrored(0, w, 20, (x) => 0.4 + 13 * Math.exp(-x / 2.4) + 2.6 * Math.exp(-x / 14))} />;
  if (kind === 'fxY' || kind === 'fxB') return <path d={mirrored(0, w, 20, (x) => (kind === 'fxB' ? [13, 20, 11, 19, 15, 19, 16, 19, 19] : [18, 20, 19, 17, 14, 19, 20, 20, 18])[x] ?? 18)} />;
  if (kind === 'fxP') return <path d={mirrored(0, w, 20, (x) => [13, 12, 11, 7, 8, 11, 13, 9, 10][x] ?? 9)} />;
  return (
    <>
      {notes[kind].map(([x, y, nw], i) => (
        <rect key={i} x={x} y={y} width={nw} height="1.300" />
      ))}
    </>
  );
}

function ClipView({ clip: [start, end, kind, label] }: { clip: Clip }) {
  const w = px(end) - px(start);
  const isPattern = ['lead', 'lead2', 'styleA', 'styleB', 'bass'].includes(kind);
  const size = kind === 'hit' ? 'text-[10px]' : kind === 'kick' || (isPattern && label !== '样式 5') ? 'text-[11px]' : 'text-[12px]';
  return (
    <div className="absolute top-px h-[55px] overflow-hidden" style={{ left: px(start), width: w }}>
      <div className={clsx('mr-px flex h-[14px] items-center gap-[3px] overflow-hidden rounded-sm px-[2px] text-[#e6eae6]', headColor[kind], size)}>
        {label !== undefined && (isPattern ? <PatternGlyph /> : <SampleGlyph />)}
        <span className={clsx('leading-[14px] whitespace-nowrap', kind === 'kick' && 'ml-auto')}>{label}</span>
      </div>
      <div className="mt-px h-10 bg-[#222b31]/70">
        <svg width={w} height={40} viewBox={`0 0 ${w} 40`} fill="currentColor" className={bodyColor[kind]} aria-hidden="true">
          <ClipBody kind={kind} start={start} end={end} />
        </svg>
      </div>
    </div>
  );
}

/* ---------- playlist ---------- */

const patterns: [string, string][] = [
  ['样式 1', 'bg-[#495157]'],
  ['样式 2', 'bg-[#495157]'],
  ['样式 3', 'bg-[#555292]'],
  ['Bass', 'bg-[#8f5255]'],
  ['样式 5', 'bg-[#555292]'],
  ['Lead', 'bg-[#8f6857]'],
  ['Lead', 'bg-[#8f6857]'],
];

function PatternItem({ index }: { index: number }) {
  const [name, color] = patterns[index];
  const selected = index === 3;
  return (
    <li className="relative">
      <button
        type="button"
        className={clsx('relative flex h-[27px] w-full items-center gap-[3px] border px-px text-[#e6eaec]', color, selected ? 'border-[#a9d445]' : 'border-transparent', /[A-Z]/.test(name) ? 'text-[12px]' : 'text-[13px]')}
      >
        <svg className="absolute inset-0 h-full w-full" viewBox="0 0 134 27" preserveAspectRatio="none" fill="#ffffff" opacity={index < 2 ? 0.06 : 0.1} aria-hidden="true">
          {Array.from({ length: 46 }, (_, i) => (
            <rect key={i} x={20 + ((i * 29) % 110)} y={3 + 20 * noise(i + index * 50)} width={index === 2 || index === 3 ? 9 : 3} height="1.200" />
          ))}
        </svg>
        <PatternGlyph />
        <span>{name}</span>
      </button>
      {selected && (
        <Svg w={8} h={12} className="absolute top-2 -left-[2px] text-[#e0405a]">
          <path d="M1 1l6 5-6 5z" stroke="#2a2026" />
        </Svg>
      )}
    </li>
  );
}

function PatternPicker() {
  return (
    <aside className="flex w-[165px] shrink-0 flex-col pl-1">
      <div className="flex h-[39px] items-center pt-3 pl-4 text-[#676f75]">
        <KeysIcon className="text-[#e4e9eb]" />
        <WaveIcon className="ml-[28px]" w={20} h={12} />
        <AutomationIcon className="ml-[28px]" />
      </div>
      <div className="mr-[5px] flex min-h-0 flex-1 border border-[#2a3238] bg-[#333b42]">
        <ul className="flex w-[139px] flex-col gap-1 pt-1 pr-px pl-1">
          {patterns.map((_, i) => (
            <PatternItem key={i} index={i} />
          ))}
        </ul>
        <div className="flex-1 border-l border-[#2a3238] bg-[#363e45]">
          <div className="flex h-[15px] items-center justify-center border border-[#5b646b] bg-[#4b5359]">
            <span className="h-1 w-[2px] bg-[#23292e]" />
          </div>
        </div>
      </div>
      <button type="button" aria-label="添加样式" className="h-5 shrink-0 pr-5 text-center text-base leading-5 font-bold text-[#c9d0d3]">+</button>
    </aside>
  );
}

function Overview() {
  return (
    <div className="h-[19px] min-w-0 flex-1 border border-[#66757b] bg-[#4d5c64]">
      <svg className="h-full w-full" viewBox={`0 0 ${TOTAL_BARS} 11`} preserveAspectRatio="none" aria-hidden="true">
        {Object.entries(trackClips).map(([track, clips]) =>
          clips.map(([s, e, kind], i) => <rect key={`${track}-${i}`} x={s} y={Number(track) - 1.5} width={e - s} height="1" fill={miniColor[kind]} />),
        )}
      </svg>
    </div>
  );
}

function TimelineHead() {
  return (
    <div className="flex h-10 shrink-0">
      <div className="flex w-[111px] shrink-0 border-r border-[#20282e]">
        <button type="button" aria-label="添加轨道" className="w-[31px] rounded-tl-xl border-t border-l border-[#2a3238] bg-[#495157] pt-4 text-base leading-4 font-bold text-[#e4e9eb]">+</button>
        <div className="grid flex-1 grid-cols-3 place-items-center border-t border-l border-[#20282e] bg-[#4a5258] text-[#7b8389]">
          <WaveIcon w={18} />
          <AutomationIcon />
          <KeysIcon className="text-[#e4e9eb]" />
          <span className="text-[7px] font-bold text-[#dfe4e6]">音符</span>
          <span className="text-[7px]">通道</span>
          <span className="text-[7px]">样式</span>
        </div>
      </div>
      <div className="flex min-w-0 flex-1 flex-col">
        <div className="flex h-5 items-center gap-[2px] bg-[#3a4249]">
          <button type="button" aria-label="向左" className="flex h-[19px] w-[18px] items-center justify-center border border-[#59626a] bg-[#485057] text-[#20272c]"><Angle d="M7 1L3 5l4 4" /></button>
          <Overview />
          <button type="button" aria-label="向右" className="ml-[2px] flex h-[19px] w-[19px] items-center justify-center border border-[#59626a] bg-[#485057] text-[#20272c]"><Angle d="M3 1l4 4-4 4" /></button>
        </div>
        <div className="relative h-5 overflow-hidden bg-[#1f2c35] text-[11px] leading-[22px] font-medium text-[#a3b1b8]">
          {Array.from({ length: 38 }, (_, i) => (
            <span key={i} className="absolute top-0 pl-px" style={{ left: px(i * 4) }}>{i * 4 + 1}</span>
          ))}
          <Svg w={9} h={9} className="absolute top-0 left-0 text-[#b3e05a]"><path d="M0 0h9L1 9z" /></Svg>
        </div>
      </div>
    </div>
  );
}

function TrackHeader({ index }: { index: number }) {
  const active = trackClips[index] !== undefined;
  return (
    <div className="flex h-14 shrink-0 flex-col justify-between rounded-r-lg border-t border-[#3a4248] bg-linear-to-b from-[#50585e] to-[#474f56] pr-[6px] pb-[3px] pl-px">
      <span className={clsx('text-[12px] leading-4', active ? 'text-[#d3dadd]' : 'text-[#747c82]')}>Track {index}</span>
      <div className="flex items-end justify-between pb-[2px]">
        <span className="ml-3 text-[12px] leading-[6px] text-[#2b3339]">...</span>
        <Led label={`Track ${index} 开关`} />
      </div>
    </div>
  );
}

function Playlist() {
  const trackNumbers = Array.from({ length: 16 }, (_, i) => i + 1);
  return (
    <section className="flex min-w-0 flex-1 flex-col border-l border-[#555d64] bg-[#444c53] pr-[6px] pb-[7px] pl-px">
      <div className="flex h-[27px] shrink-0 items-center text-[#8e969b]">
        <Chevron className="ml-[11px]" />
        <Magnet size={15} className="mr-[20px] ml-3 -rotate-45 text-[#4fa377]" strokeWidth={4} />
        <div className="flex items-center gap-[6px]">
          <Pencil size={14} className="-scale-x-100" />
          <Svg w={15} h={14} className="text-[#5c94c0]"><path d="M1 4l3-3 3 4 3 1 4 4 1 4-4-1-3-3-3 2-3-1 1-4z" /></Svg>
          <Ban size={14} />
          <Svg w={16} h={12}><path d="M0 4h3l4-4v12L3 8H0z" /><path d="M9 3l6 6M15 3L9 9" stroke="currentColor" strokeWidth="1.500" /></Svg>
          <Svg w={14} h={10}><path d="M0 5l5-5v3h4V0l5 5-5 5V7H5v3z" /></Svg>
          <Svg w={14} h={14}><path d="M0 1h8v7zM9 2l3 1 2 10-4 1-1-2z" /></Svg>
          <Maximize size={14} />
          <Search size={15} />
          <Svg w={15} h={12}><path d="M0 4h3l4-4v12L3 8H0zM9 1h1.500v10H9zM13 1h1.500v10H13z" /></Svg>
        </div>
        <SpeakerArrow className="ml-5" />
        <h2 className="ml-1 flex items-center gap-2 font-[Noto_Sans,Noto_Sans_CJK_SC,sans-serif] text-[13px]">
          播放列表 - Arrangement <Chevron className="text-[#656d73]" /> Bass <Chevron className="text-[#656d73]" />
        </h2>
        <div className="ml-auto flex gap-[5px]">
          {['M3 4h7', 'M3 4.500h8v6H3z', 'M3 3l8 8M11 3l-8 8'].map((d, i) => (
            <button key={d} type="button" aria-label={['最小化播放列表', '最大化播放列表', '关闭播放列表'][i]}>
              <Svg w={14} h={14}><path d={d} fill="none" stroke="currentColor" strokeWidth="1.800" /></Svg>
            </button>
          ))}
        </div>
      </div>
      <div className="flex min-h-0 flex-1">
        <PatternPicker />
        <div className="flex min-w-0 flex-1 flex-col border-l border-[#20282e]">
          <TimelineHead />
          <div className="flex min-h-0 flex-1 overflow-hidden border-t border-[#1b252c] bg-[#2b3c46]">
            <div className="w-[100px] shrink-0">
              {trackNumbers.map((n) => (
                <TrackHeader key={n} index={n} />
              ))}
            </div>
            <div className="relative ml-[10px] min-w-0 flex-1 overflow-hidden border-l border-[#16232c]">
              <div className="absolute inset-0">
                {Array.from({ length: 75 }, (_, i) => (
                  <span
                    key={i}
                    className={clsx('absolute inset-y-0 border-l border-[#12212a]', i % 4 < 2 ? 'bg-[#32444f]' : 'bg-[#2e404a]')}
                    style={{ left: px(i * 2), width: px(i * 2 + 2) - px(i * 2) }}
                  />
                ))}
              </div>
              {trackNumbers.map((n) => (
                <div key={n} className="relative h-14 border-b border-[#101d25]">
                  {trackClips[n]?.map((c, i) => <ClipView key={i} clip={c} />)}
                </div>
              ))}
              <p className="absolute right-0 bottom-4 font-[Open_Sans,sans-serif] text-[23px] leading-7 font-semibold text-white">www.flpdown.com</p>
            </div>
          </div>
        </div>
        <div className="flex w-5 shrink-0 flex-col items-stretch border-l border-[#20282e] bg-[#363d43] text-[#20272c]">
          <button type="button" aria-label="缩放" className="flex h-5 items-center justify-center border border-[#59626a] bg-[#485057]"><span className="size-1 bg-[#20272c]" /></button>
          <button type="button" aria-label="向上" className="mb-px flex h-[19px] items-center justify-center border border-[#525b62] bg-[#485057]"><Angle d="M1 7l4-4 4 4" /></button>
          <span className="h-8 border border-[#6a7379] bg-[#535b62]" />
          <button type="button" aria-label="向下" className="mt-auto flex h-5 items-center justify-center border border-[#4b545b] bg-[#434b52]"><Angle d="M1 3l4 4 4-4" /></button>
        </div>
      </div>
    </section>
  );
}

export default function App() {
  return (
    <div className="flex h-screen flex-col overflow-hidden bg-[#626970] font-[Roboto,Noto_Sans_CJK_SC,sans-serif]">
      <Toolbar />
      <main className="flex min-h-0 flex-1 items-start">
        <ChannelRack />
        <div className="flex min-w-0 flex-1 self-stretch">
          <Playlist />
        </div>
      </main>
    </div>
  );
}
